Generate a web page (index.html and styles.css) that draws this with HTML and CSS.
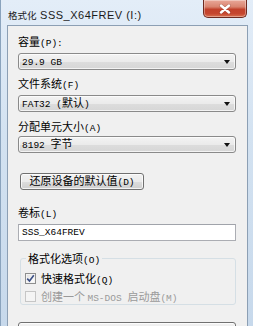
FILE: index.html
```html
<!DOCTYPE html>
<html>
<head>
<meta charset="utf-8">
<link rel="stylesheet" href="styles.css">
</head>
<body>
<div class="window">
  <div class="titlebar">
    <span class="title"><span class="tcjk">格式化</span> SSS_X64FREV (I:)</span>
    <div class="close">
      <svg width="12" height="10" viewBox="0 0 12 10"><path d="M2 1.5 L10 8.5 M10 1.5 L2 8.5" stroke="#5a1a12" stroke-width="3.4" stroke-linecap="round" opacity="0.35"/><path d="M2 1.5 L10 8.5 M10 1.5 L2 8.5" stroke="#ffffff" stroke-width="2.4" stroke-linecap="round"/></svg>
    </div>
  </div>
  <div class="client">
    <div class="label l1">容量<span class="m">(P):</span></div>
    <div class="combo c1"><span class="val"><span class="m">29.9 GB</span></span><i class="arrow"></i></div>
    <div class="label l2">文件系统<span class="m">(F)</span></div>
    <div class="combo c2"><span class="val"><span class="m">FAT32 (</span>默认<span class="m">)</span></span><i class="arrow"></i></div>
    <div class="label l3">分配单元大小<span class="m">(A)</span></div>
    <div class="combo c3"><span class="val"><span class="m">8192 </span>字节</span><i class="arrow"></i></div>
    <div class="btn restore"><span>还原设备的默认值<span class="m">(D)</span></span></div>
    <div class="label l4">卷标<span class="m">(L)</span></div>
    <div class="input"><span class="m">SSS_X64FREV</span></div>
    <fieldset class="group">
      <legend>格式化选项<span class="m">(O)</span></legend>
      <div class="check">
        <span class="box on"><svg width="9" height="9" viewBox="0 0 9 9"><path d="M1.2 4.6 L3.5 7 L7.8 1.2" fill="none" stroke="#3b4f86" stroke-width="1.6"/></svg></span>
        <span class="ctext">快速格式化<span class="m">(Q)</span></span>
      </div>
      <div class="check disabled">
        <span class="box"></span>
        <span class="ctext">创建一个 <span class="m">MS-DOS </span>启动盘<span class="m">(M)</span></span>
      </div>
    </fieldset>
    <div class="btn start"></div>
  </div>
</div>
</body>
</html>
```
FILE: styles.css
```css
html, body {
  margin: 0;
  padding: 0;
  width: 253px;
  height: 326px;
  overflow: hidden;
}
body {
  font-family: "Noto Sans CJK SC", sans-serif;
  font-size: 11px;
  color: #000;
}
.window {
  width: 253px;
  height: 340px;
  box-sizing: border-box;
  padding: 0 5px 0 6px;
  background: linear-gradient(to bottom, #e3edf8 0%, #d3e2f1 40%, #c6d8eb 100%);
  border-left: 1px solid #8aa3bd;
  display: flex;
  flex-direction: column;
}
.titlebar {
  height: 25px;
  display: flex;
  align-items: flex-start;
}
.title {
  font-family: "Liberation Sans", sans-serif;
  font-size: 11px;
  letter-spacing: 0.5px;
  color: #1b1b1b;
  padding-left: 1px;
  margin-top: 8px;
  line-height: 14px;
  white-space: nowrap;
}
.tcjk {
  font-family: "Noto Sans CJK SC", sans-serif;
  font-size: 9.5px;
  letter-spacing: 0;
}
.close {
  margin-left: auto;
  margin-right: 1px;
  width: 44px;
  height: 18px;
  box-sizing: border-box;
  border: 1px solid #6e2a20;
  border-top: none;
  border-radius: 0 0 5px 5px;
  background: linear-gradient(to bottom, #e9a899 0%, #d98470 40%, #c2412b 55%, #c5462f 80%, #d8704f 100%);
  box-shadow: inset 0 0 0 1px rgba(255,255,255,0.35);
  display: flex;
  align-items: center;
  justify-content: center;
}
.client {
  flex: 1;
  background: #f0f0f0;
  border: 1px solid #8c9fb4;
  border-bottom: none;
  padding: 8px 11px 0 10px;
  display: flex;
  flex-direction: column;
}
.m {
  font-family: "Liberation Mono", monospace;
  font-size: 9.5px;
}
.label {
  height: 14px;
  line-height: 14px;
  white-space: nowrap;
}
.l2 { margin-top: 6px; }
.l3 { margin-top: 7px; }
.l4 { margin-top: 15px; }
.combo {
  height: 17px;
  box-sizing: border-box;
  border: 1px solid #8a8a8a;
  border-radius: 3px;
  background: linear-gradient(to bottom, #f3f3f3 0%, #ebebeb 50%, #dddddd 51%, #d6d6d6 100%);
  box-shadow: inset 0 0 0 1px rgba(255,255,255,0.7);
  display: flex;
  align-items: center;
  padding: 0 5px 0 3px;
  line-height: 15px;
  white-space: nowrap;
}
.val { white-space: pre; }
.c1 { margin-top: 5px; }
.c2 { margin-top: 5px; }
.c3 { margin-top: 3px; }
.arrow {
  margin-left: auto;
  width: 0;
  height: 0;
  border-left: 3.5px solid transparent;
  border-right: 3.5px solid transparent;
  border-top: 4px solid #111;
  margin-top: 1px;
}
.btn {
  height: 17px;
  box-sizing: border-box;
  border: 1px solid #707070;
  border-radius: 3px;
  background: linear-gradient(to bottom, #f2f2f2 0%, #ebebeb 50%, #dddddd 51%, #cfcfcf 100%);
  box-shadow: inset 0 0 0 1px rgba(255,255,255,0.75);
  display: flex;
  align-items: center;
  justify-content: center;
  line-height: 15px;
  white-space: nowrap;
}
.restore {
  margin-top: 20px;
  margin-left: 2px;
  width: 124px;
}
.input {
  margin-top: 5px;
  height: 17px;
  box-sizing: border-box;
  border: 1px solid #abadb3;
  border-top-color: #a0a3aa;
  background: #fff;
  display: flex;
  align-items: center;
  padding-left: 3px;
}
.group {
  margin: 10px 0 0 2px;
  padding: 5px 4px 0 4px;
  border: 1px solid #d5dfe5;
  border-radius: 3px;
  min-width: 0;
  height: 54px;
  box-sizing: border-box;
  display: flex;
  flex-direction: column;
  gap: 2px;
}
.group legend {
  padding: 0 2px;
  margin-left: 1px;
  line-height: 14px;
  height: 14px;
  white-space: nowrap;
}
.check {
  height: 16px;
  display: flex;
  align-items: center;
  white-space: nowrap;
}
.box {
  width: 11px;
  height: 11px;
  box-sizing: border-box;
  border: 1px solid #8e8f8f;
  background: linear-gradient(135deg, #dcdcdc 0%, #f6f6f6 60%, #ffffff 100%);
  box-shadow: inset 0 0 0 1px #f4f4f4;
  display: flex;
  align-items: center;
  justify-content: center;
  margin-right: 5px;
}
.box svg { display: block; }
.disabled .box {
  border-color: #c6c6c6;
  background: #f4f4f4;
  box-shadow: none;
}
.disabled .ctext { color: #9a9a9a; }
.ctext { white-space: pre; }
.start {
  margin-top: 17px;
}
```
